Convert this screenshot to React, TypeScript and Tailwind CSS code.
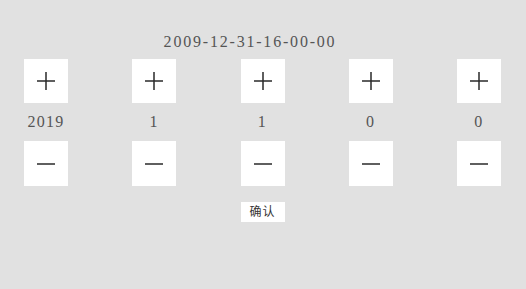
import React from "react";

const cols = ["2019", "1", "1", "0", "0"];

function Plus() {
  return (
    <svg width="20" height="20" viewBox="0 0 20 20">
      <path d="M10 1V19M1 10H19" stroke="#2a2a2a" strokeWidth="1.5" />
    </svg>
  );
}
function Minus() {
  return (
    <svg width="20" height="20" viewBox="0 0 20 20">
      <path d="M1 10H19" stroke="#2a2a2a" strokeWidth="1.5" />
    </svg>
  );
}

export default function App() {
  return (
    <div
      className="w-[526px] h-[289px] bg-[#e1e1e1] text-[#555] flex flex-col"
      style={{ fontFamily: '"Liberation Serif", "Noto Sans CJK SC", serif' }}
    >
      <div className="pt-[31px] h-[59px] text-center pr-[26px] text-[16px] leading-[22px] tracking-[1.8px]">
        2009-12-31-16-00-00
      </div>
      <div className="flex justify-between pl-6 pr-[25px]">
        {cols.map((c, i) => (
          <div key={i} className="w-[44px] flex flex-col items-center">
            <button className="w-[44px] h-[44px] bg-white flex items-center justify-center">
              <Plus />
            </button>
            <div className="h-[38px] flex items-center justify-center text-[16px] tracking-[1.3px] whitespace-nowrap">
              {c}
            </div>
            <button className="w-[44px] h-[45px] bg-white flex items-center justify-center">
              <Minus />
            </button>
          </div>
        ))}
      </div>
      <div className="flex justify-center pt-[16px]">
        <button className="w-[44px] h-[20px] bg-white text-[12px] leading-[20px] text-[#333] tracking-[1px] ml-[-1px]">
          确认
        </button>
      </div>
    </div>
  );
}
